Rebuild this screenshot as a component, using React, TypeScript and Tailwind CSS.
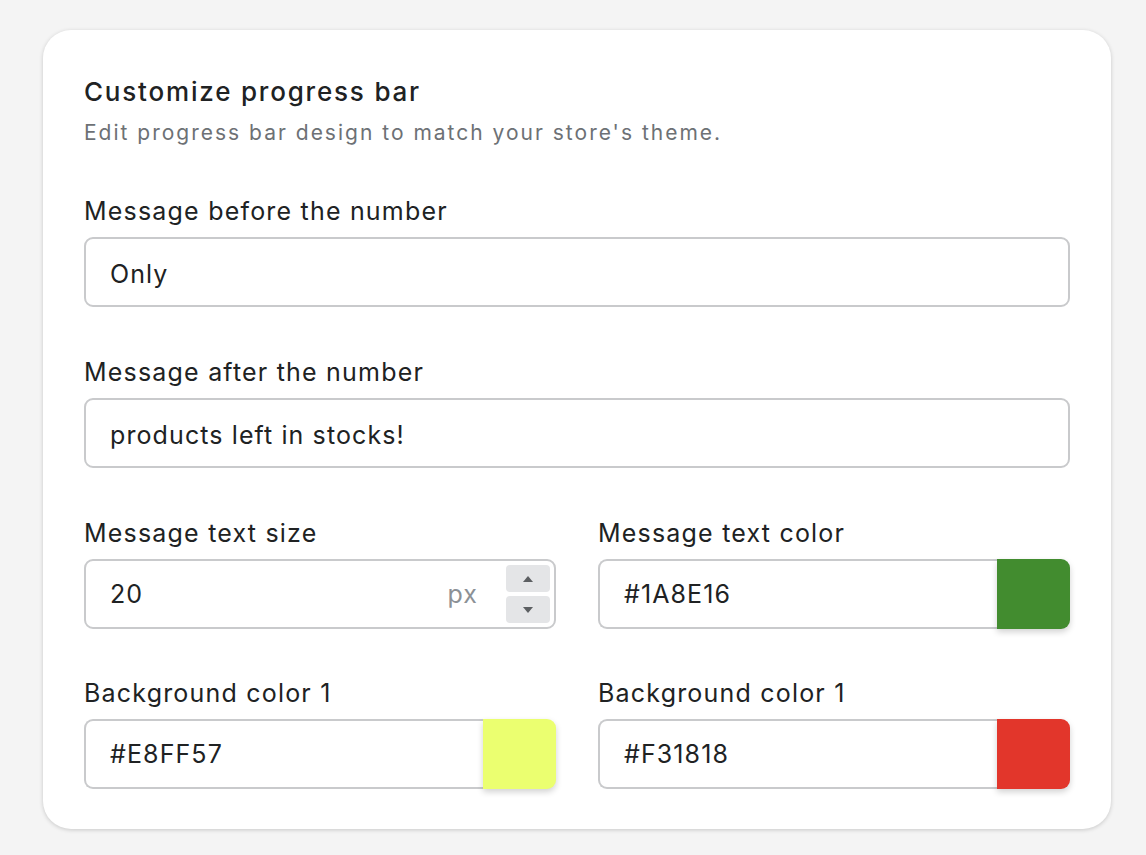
import { useState } from 'react'

function Field({ label, children }: { label: string; children: React.ReactNode }) {
    return (
        <div className="flex flex-col">
            <label className="text-[25px] leading-[32px] tracking-[1.2px] text-[#202223] mb-[10px]">{label}</label>
            {children}
        </div>
    )
}

function TextInput({ value }: { value: string }) {
    const [v, setV] = useState(value)
    return (
        <input
            className="h-[70px] w-full rounded-[9px] border-2 border-[#c9cacc] bg-white px-[24px] pt-[3px] text-[25px] tracking-[1.1px] text-[#202223] outline-none"
            value={v}
            onChange={e => setV(e.target.value)}
        />
    )
}

function ColorInput({ value, swatch }: { value: string; swatch: string }) {
    return (
        <div className="relative flex h-[70px] w-full">
            <div className="flex flex-1 items-center rounded-l-[9px] border-2 border-r-0 border-[#c9cacc] bg-white px-[24px] pt-[2px] text-[25px] tracking-[1.1px] text-[#202223]">
                {value}
            </div>
            <div
                className={`w-[73px] rounded-r-[9px] shadow-[0_3px_6px_rgba(0,0,0,0.18)] ${swatch}`}
            />
        </div>
    )
}

export default function App() {
    return (
        <div className="min-h-screen bg-[#f4f4f4] px-[43px] pt-[30px] font-['Inter',sans-serif]">
            <div className="w-[1068px] rounded-[28px] bg-white px-[41px] pt-[46px] pb-[40px] shadow-[0_1px_4px_rgba(0,0,0,0.18)]">
                <h2 className="text-[26px] leading-[32px] font-medium tracking-[1.8px] text-[#202223]">Customize progress bar</h2>
                <p className="mt-[11px] text-[21px] leading-[28px] tracking-[2px] text-[#6d7175]">
                    Edit progress bar design to match your store's theme.
                </p>

                <div className="mt-[48px] flex flex-col gap-[49px]">
                    <Field label="Message before the number">
                        <TextInput value="Only" />
                    </Field>
                    <Field label="Message after the number">
                        <TextInput value="products left in stocks!" />
                    </Field>

                    <div className="grid grid-cols-2 gap-x-[42px] gap-y-[48px]">
                        <Field label="Message text size">
                            <div className="flex h-[70px] items-center rounded-[9px] border-2 border-[#c9cacc] bg-white pl-[24px] pr-[4px] text-[25px] tracking-[1.1px]">
                                <span className="flex-1 pt-[2px] text-[#202223]">20</span>
                                <span className="mr-[28px] pt-[2px] text-[#8c9196]">px</span>
                                <div className="flex flex-col gap-[4px]">
                                    <button className="flex h-[27px] w-[44px] items-center justify-center rounded-[4px] bg-[#e4e5e7]">
                                        <svg width="10" height="6" viewBox="0 0 10 6"><path d="M5 0L10 6H0z" fill="#5c5f62" /></svg>
                                    </button>
                                    <button className="flex h-[27px] w-[44px] items-center justify-center rounded-[4px] bg-[#e4e5e7]">
                                        <svg width="10" height="6" viewBox="0 0 10 6"><path d="M0 0h10L5 6z" fill="#5c5f62" /></svg>
                                    </button>
                                </div>
                            </div>
                        </Field>
                        <Field label="Message text color">
                            <ColorInput value="#1A8E16" swatch="bg-[#428c2f]" />
                        </Field>
                        <Field label="Background color 1">
                            <ColorInput value="#E8FF57" swatch="bg-[#ebff70]" />
                        </Field>
                        <Field label="Background color 1">
                            <ColorInput value="#F31818" swatch="bg-[#e2362b]" />
                        </Field>
                    </div>
                </div>
            </div>
        </div>
    )
}
